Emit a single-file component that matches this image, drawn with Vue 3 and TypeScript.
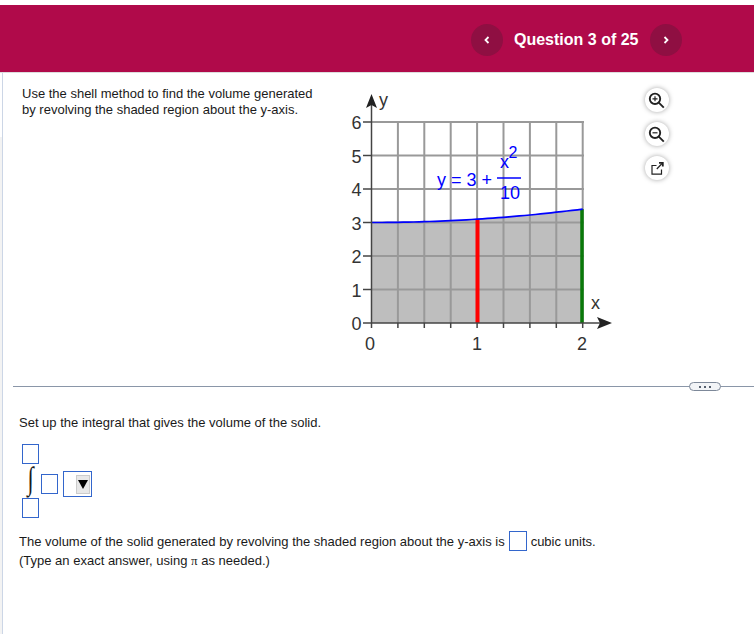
<template>
  <div class="page">
    <header class="topbar">
      <nav class="pager">
        <button class="nav-btn" aria-label="Previous">
          <svg width="10" height="10" viewBox="0 0 10 10"><path d="M6.5 2 3.5 5l3 3" /></svg>
        </button>
        <span class="title">Question 3 of 25</span>
        <button class="nav-btn" aria-label="Next">
          <svg width="10" height="10" viewBox="0 0 10 10"><path d="M3.5 2 6.5 5l-3 3" /></svg>
        </button>
      </nav>
    </header>

    <main class="main">
      <section class="question">
        <p class="prompt">Use the shell method to find the volume generated by revolving the shaded region about the y-axis.</p>

        <svg class="graph" width="280" height="275" viewBox="340 85 280 275">
          <rect x="371.5" :y="yPos(3)" :width="26.4 * 8" :height="yPos(0) - yPos(3)" fill="#bebebe" />
          <path :d="shadeTop" fill="#bebebe" />
          <g stroke="#999" stroke-width="2" fill="none">
            <line v-for="x in gridX" :key="'gx' + x" :x1="x" y1="122" :x2="x" y2="323" />
            <line v-for="n in 6" :key="'gy' + n" x1="371.5" :y1="yPos(n)" x2="584" :y2="yPos(n)" />
          </g>
          <line x1="477.5" :y1="yPos(0)" x2="477.5" :y2="curveY(1)" stroke="#f00" stroke-width="4" />
          <line x1="582" :y1="yPos(0)" x2="582" :y2="curveY(2)" stroke="#0a7a0a" stroke-width="3.5" />
          <path :d="curve" stroke="#00f" stroke-width="1.7" fill="none" />

          <g stroke="#444" stroke-width="1.5">
            <line x1="371.5" y1="100" x2="371.5" y2="328" />
            <line x1="371" y1="323" x2="604" y2="323" />
            <line v-for="n in 7" :key="'ty' + n" x1="363" :y1="yPos(n - 1)" x2="371" :y2="yPos(n - 1)" />
            <line v-for="x in gridX" :key="'tx' + x" :x1="x" y1="323" :x2="x" y2="328" />
          </g>
          <path d="M371.5 94 377 108 371.5 105 366 108Z" fill="#222" />
          <path d="M612 323 597 317 600 323 597 329Z" fill="#222" />

          <g class="axis-text">
            <text v-for="n in 7" :key="'ly' + n" x="356.5" :y="yPos(n - 1) + 7" text-anchor="middle">{{ n - 1 }}</text>
            <text x="370" y="350" text-anchor="middle">0</text>
            <text x="477" y="350" text-anchor="middle">1</text>
            <text x="582" y="350" text-anchor="middle">2</text>
            <text x="379" y="106">y</text>
            <text x="591" y="309">x</text>
          </g>
          <g class="eq-text">
            <text x="437" y="186">y = 3 +</text>
            <text x="500" y="168">x</text>
            <text class="sup" x="508.5" y="157.5">2</text>
            <text x="500" y="198.5">10</text>
            <line x1="497" y1="178" x2="521" y2="178" stroke="#00f" stroke-width="1.5" />
          </g>
        </svg>

        <div class="tools">
          <button v-for="tool in tools" :key="tool.name" class="tool-btn" :class="tool.cls" :aria-label="tool.name">
            <svg width="18" height="18" viewBox="0 0 18 18">
              <path v-for="(d, i) in tool.paths" :key="i" :d="d" />
            </svg>
          </button>
        </div>
      </section>

      <div class="divider"><span class="more"><i></i><i></i><i></i></span></div>

      <section class="answer">
        <p class="setup">Set up the integral that gives the volume of the solid.</p>

        <div class="integral">
          <div class="limits">
            <span class="box"></span>
            <span class="int-sign">∫</span>
            <span class="box"></span>
          </div>
          <span class="box integrand"></span>
          <div class="select-box"><span class="select-btn"><b></b></span></div>
        </div>

        <p class="result">
          The volume of the solid generated by revolving the shaded region about the y-axis is
          <span class="box inline"></span>
          cubic units.
        </p>
        <p class="hint">(Type an exact answer, using <em>π</em> as needed.)</p>
      </section>
    </main>
  </div>
</template>

<script setup lang="ts">
const x0 = 371.5
const unitX = 105.6

const yPos = (n: number) => 323 - n * 33.5
const curveY = (x: number) => yPos(3 + (x * x) / 10)
const gridX = Array.from({ length: 8 }, (_, i) => x0 + (i + 1) * 26.4)

const samples = Array.from({ length: 41 }, (_, i) => i / 20)
const curve = samples
  .map((x, i) => `${i ? 'L' : 'M'}${(x0 + x * unitX).toFixed(1)} ${curveY(x).toFixed(1)}`)
  .join(' ')
const shadeTop = `${curve} L${x0 + 2 * unitX} ${yPos(3)} L${x0} ${yPos(3)}Z`

const lens = 'M7 2.6a5.2 5.2 0 1 0 0 10.4 5.2 5.2 0 0 0 0-10.4Z'
const handle = 'M10.8 11.6l5 5'

const tools = [
  { name: 'Zoom in', cls: 'lens', paths: [lens, handle, 'M7 5.3v5M4.5 7.8h5'] },
  { name: 'Zoom out', cls: 'lens', paths: [lens, handle, 'M4.5 7.8h5'] },
  { name: 'Open', cls: 'open', paths: ['M8.5 6.5H4v8.7h9.5V10.5', 'M8.8 10 14 4.5', 'M11 3.8h3.8v3.8'] }
]
</script>

<style>
html,
body {
  background: #fff;
}
</style>

<style scoped>
.page {
  height: 634px;
  overflow: hidden;
  padding-top: 5px;
  box-sizing: border-box;
  font-family: "Liberation Sans", Arial, sans-serif;
  color: #1a1a1a;
  background: linear-gradient(#fff 137px, #f3f3f3 137px) left top / 2px 100% no-repeat;
}

.topbar {
  height: 68px;
  box-sizing: border-box;
  background: #b00a4a;
  border-bottom: 1px solid #ddd;
  display: flex;
  align-items: center;
  padding: 3px 0 0 471px;
}

.pager {
  display: flex;
  align-items: center;
  gap: 11px;
}

.nav-btn {
  width: 32px;
  height: 32px;
  padding: 0;
  border: none;
  border-radius: 50%;
  background: #8f0f42;
  display: flex;
  align-items: center;
  justify-content: center;
}

.nav-btn path {
  fill: none;
  stroke: #fff;
  stroke-width: 1.8;
}

.title {
  width: 125px;
  color: #fff;
  font-size: 16px;
  font-weight: 700;
  white-space: nowrap;
}

.main {
  margin-left: 2px;
  border-left: 1px solid #ccd6e6;
  height: 561px;
}

.question {
  display: flex;
  align-items: flex-start;
  padding: 12px 0 0 19px;
  height: 309px;
  box-sizing: border-box;
}

.prompt {
  width: 300px;
  margin: 1px 18px 0 0;
  font-size: 13px;
  line-height: 16px;
}

.graph {
  flex: none;
}

.tools {
  display: flex;
  flex-direction: column;
  gap: 10px;
  margin: 3px 0 0 25px;
}

.tool-btn {
  width: 24px;
  height: 24px;
  padding: 0;
  border: none;
  border-radius: 50%;
  background: #fff;
  box-shadow: 0 0 5px rgba(0, 0, 0, 0.35);
  display: flex;
  align-items: center;
  justify-content: center;
}

.tool-btn path {
  fill: none;
  stroke: #222;
}

.lens path {
  stroke-width: 1.9;
}

.lens path:last-child {
  stroke-width: 1.2;
}

.open path {
  stroke-width: 1.2;
}

.open path:last-child {
  stroke-width: 1.8;
}

.divider {
  margin-left: 10px;
  height: 9px;
  position: relative;
  display: flex;
  align-items: center;
}

.divider::before {
  content: "";
  flex: 1;
  border-top: 1px solid #8a96a8;
}

.more {
  position: absolute;
  left: 676px;
  top: 0;
  width: 32px;
  height: 9px;
  box-sizing: border-box;
  border: 1px solid #7d8899;
  border-radius: 5px;
  background: #f2f4f7;
  display: flex;
  align-items: center;
  justify-content: center;
  gap: 3px;
}

.more i {
  width: 2px;
  height: 2px;
  background: #555f6e;
}

.answer {
  padding: 22px 0 0 16px;
}

.setup,
.result,
.hint {
  margin: 0;
  font-size: 13px;
  line-height: 19px;
}

.integral {
  display: flex;
  align-items: center;
  margin: 12px 0 0 3px;
}

.limits {
  width: 19px;
  display: flex;
  flex-direction: column;
}

.box {
  display: block;
  box-sizing: border-box;
  width: 17px;
  height: 20px;
  border: 1px solid #3366cc;
  background: #fff;
}

.int-sign {
  width: 17px;
  height: 34px;
  font-family: "Liberation Serif", serif;
  font-size: 32px;
  line-height: 29px;
  text-align: center;
  transform: scaleX(0.7);
}

.integrand {
  margin-top: 6px;
}

.select-box {
  margin: 6px 0 0 5px;
  box-sizing: border-box;
  width: 29px;
  height: 26px;
  border: 1px solid #3366cc;
  padding-right: 1px;
  display: flex;
  align-items: center;
  justify-content: flex-end;
}

.select-btn {
  width: 14px;
  height: 19px;
  background: #e8e8e8;
  border: 1px solid #ccc;
  box-sizing: border-box;
  display: flex;
  align-items: center;
  justify-content: center;
}

.select-btn b {
  border-left: 5px solid transparent;
  border-right: 5px solid transparent;
  border-top: 9px solid #000;
}

.result {
  margin-top: 13px;
  display: flex;
  align-items: center;
  gap: 4px;
  white-space: nowrap;
}

.box.inline {
  width: 18px;
}

.hint em {
  font-family: "Liberation Serif", serif;
  font-style: normal;
}

.axis-text text {
  font-size: 18px;
  fill: #333;
}

.eq-text text {
  font-size: 18px;
  fill: #00f;
}

.eq-text .sup {
  font-size: 16px;
}
</style>
